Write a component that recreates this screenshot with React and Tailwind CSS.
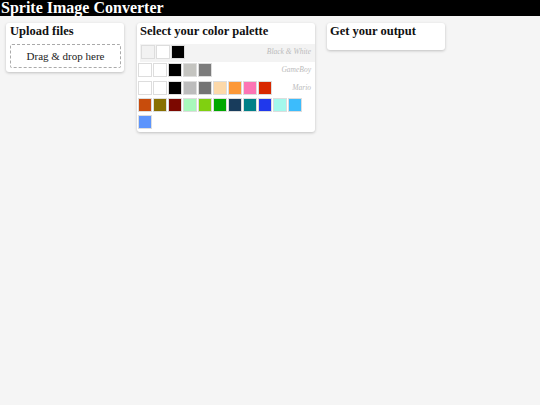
const palettes = [
  { name: "Black & White", colors: ["#f2f2f2", "#ffffff", "#000000"], selected: true },
  { name: "GameBoy", colors: ["#ffffff", "#ffffff", "#000000", "#c4c4c0", "#7c7c7c"] },
  {
    name: "Mario",
    colors: [
      "#ffffff", "#ffffff", "#000000", "#bcbcbc", "#747474", "#fcd8a8", "#fc9838", "#fc74b4", "#d82800",
      "#c84c0c", "#887000", "#7c0800", "#a8f8bc", "#80d010", "#00a800", "#183c5c", "#008088", "#2038ec",
      "#a4f8ec", "#3cbcfc", "#5c94fc",
    ],
  },
];

function Card({ title, className = "", titleClass = "px-[3px]", children }) {
  return (
    <div className={`bg-white rounded-[3px] shadow-[0_1px_3px_rgba(0,0,0,0.22)] ${className}`}>
      <h2 className={`pt-[1px] h-[21px] text-[12.5px] leading-[15px] font-bold text-[#111] ${titleClass}`}>{title}</h2>
      {children}
    </div>
  );
}

export default function App() {
  return (
    <div className="min-h-[405px] bg-[#f5f5f5] font-['Liberation_Serif',serif]">
      <header className="h-[16px] bg-black">
        <h1 className="pl-[1px] text-[16px] leading-[15px] font-bold text-white">Sprite Image Converter</h1>
      </header>

      <main className="flex items-start pt-[7px] px-[6px]">
        {/* UPLOAD */}
        <Card title="Upload files" titleClass="px-[4px]" className="w-[118px] pb-[4px]">
          <div className="ml-[4px] mr-[3px] h-[24px] flex items-center justify-center border border-dashed border-[#aaa] rounded-[2px] text-[11px] text-[#222]">
            Drag &amp; drop here
          </div>
        </Card>

        {/* PALETTES */}
        <Card title="Select your color palette" className="w-[178px] ml-[13px]">
          {palettes.map((p) => (
            <div
              key={p.name}
              className={`pt-[1px] pr-[4px] text-[0px] leading-[0px] ${p.selected ? "ml-[3px] pl-[1px] bg-[#f3f3f3]" : "pl-[1px]"}`}
            >
              <span className="float-right ml-[8px] h-[14px] text-[7.5px] leading-[14px] italic text-[#bbb]">{p.name}</span>
              {p.colors.map((c, i) => (
                <span
                  key={i}
                  className="inline-block align-top w-[14px] h-[14px] mr-[1px] mb-[3px] border border-[#ddd]"
                  style={{ backgroundColor: c }}
                />
              ))}
            </div>
          ))}
        </Card>

        {/* OUTPUT */}
        <Card title="Get your output" className="w-[118px] h-[27px] ml-[12px]" />
      </main>
    </div>
  );
}
